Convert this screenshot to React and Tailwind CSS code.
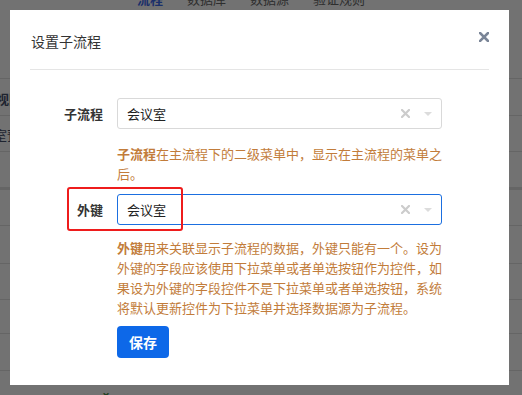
// 设置子流程 modal over a dimmed page
const font = { fontFamily: '"Noto Sans CJK SC", "Noto Sans", sans-serif' };

const rowLines = [78, 115, 151, 187, 225, 263, 299, 333, 370];

const Select = ({ value, focused }) => (
  <div
    className={`flex items-center h-[31px] w-[325px] rounded-[3px] border bg-white pl-[9px] pr-[8px] ${
      focused ? 'border-[#1b6fe0]' : 'border-[#d9d9d9]'
    }`}
  >
    <span className="flex-1 text-[13px] text-[#222]">{value}</span>
    <svg width="9" height="9" viewBox="0 0 9 9" className="mr-[14px]">
      <path d="M1 1 L8 8 M8 1 L1 8" stroke="#cccccc" strokeWidth="2.2" strokeLinecap="square" />
    </svg>
    <span className="w-0 h-0 border-l-[4px] border-r-[4px] border-t-[4px] border-l-transparent border-r-transparent border-t-[#dcdcdc] mr-[1px]" />
  </div>
);

const Field = ({ label, value, focused, helpClass, children }) => (
  <div className="flex flex-col">
    <div className="flex items-center">
      <div className="w-[73px] text-right text-[13px] font-bold text-[#333]">{label}</div>
      <div className="ml-[14px]">
        <Select value={value} focused={focused} />
      </div>
    </div>
    <p className={`ml-[87px] w-[330px] text-[13px] leading-[20px] text-[#c27c3a] ${helpClass}`}>{children}</p>
  </div>
);

export default function App() {
  return (
    <div className="relative w-[522px] h-[395px] overflow-hidden bg-[#727272]" style={font}>
      {/* dimmed page behind the modal */}
      <div className="flex gap-[24px] pl-[137px] h-[10px] items-end overflow-hidden text-[13px] leading-[16px] -mt-[3px]">
        <span className="font-bold text-[#1a2f6a]">流程</span>
        <span className="text-[#2e2e2e]">数据库</span>
        <span className="text-[#2e2e2e]">数据源</span>
        <span className="text-[#2e2e2e]">验证规则</span>
      </div>
      {rowLines.map((y, i) => (
        <div key={y} className="absolute left-0 right-0 h-px bg-[#656565]" style={{ top: y }}>
          {i === 3 && <div className="h-[3px] bg-[#656565]" />}
        </div>
      ))}
      <span className="absolute left-[-4px] top-[89px] text-[13px] font-bold text-[#1e2430]">视图</span>
      <span className="absolute left-[-6px] top-[125px] text-[13px] text-[#1e2430]">室预</span>
      <span className="absolute left-[101px] top-[382px] text-[12px] font-bold text-[#1f3f1f]">⌄</span>

      {/* modal */}
      <div className="absolute left-[10px] top-[10px] w-[499px] h-[375px] bg-white px-[20px]">
        <div className="flex items-center justify-between h-[60px] border-b border-[#e5e5e5] pt-[4px]">
          <span className="pl-[1px] text-[14px] text-[#333]">设置子流程</span>
          <svg width="10" height="10" viewBox="0 0 10 10" className="mb-[10px]">
            <path d="M1 1 L9 9 M9 1 L1 9" stroke="#7a8597" strokeWidth="2.6" strokeLinecap="square" />
          </svg>
        </div>

        <div className="flex flex-col pt-[28px]">
          <Field label="子流程" value="会议室" helpClass="mt-[15px]">
            <span className="font-bold">子流程</span>在主流程下的二级菜单中，显示在主流程的菜单之后。
          </Field>
          <div className="mt-[10px]">
            <Field label="外键" value="会议室" focused helpClass="mt-[13px]">
              <span className="font-bold">外键</span>用来关联显示子流程的数据，外键只能有一个。设为外键的字段应该使用下拉菜单或者单选按钮作为控件，如果设为外键的字段控件不是下拉菜单或者单选按钮，系统将默认更新控件为下拉菜单并选择数据源为子流程。
            </Field>
          </div>
          <div className="ml-[87px] mt-[8px]">
            <button className="h-[32px] w-[52px] rounded-[4px] bg-[#0d68e8] text-[14px] font-bold text-white">保存</button>
          </div>
        </div>

        {/* red annotation box */}
        <div className="absolute left-[57px] top-[177px] w-[116px] h-[44px] rounded-[3px] border-[2px] border-[#ee1c1c]" />
      </div>
    </div>
  );
}
